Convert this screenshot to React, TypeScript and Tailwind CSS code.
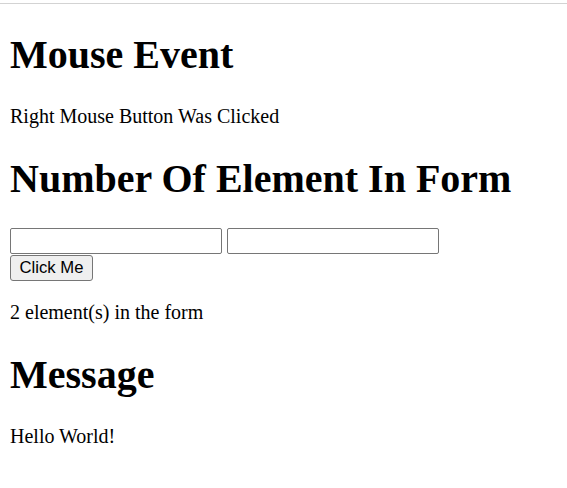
export default function App() {
  return (
    <div className="min-h-screen bg-white text-black font-['Liberation_Serif','Times_New_Roman',serif]">
      <div className="h-[3px]" />
      <div className="border-t border-[#d3d3d3] px-[10px] pb-[40px]">
        <h1 className="mt-[27.5px] text-[40px] font-bold leading-[46px]">Mouse Event</h1>
        <p className="mt-[27px] text-[20px] leading-[23px]">Right Mouse Button Was Clicked</p>

        <h1 className="mt-[28px] text-[40px] font-bold leading-[46px]">Number Of Element In Form</h1>
        <form className="mt-[26.5px]" onSubmit={(e) => e.preventDefault()}>
          <div className="flex gap-[5px]">
            <input type="text" className="w-[212px] h-[26px] border border-[#767676] rounded-[2px] bg-white px-[3px] outline-none" />
            <input type="text" className="w-[212px] h-[26px] border border-[#767676] rounded-[2px] bg-white px-[3px] outline-none" />
          </div>
          <button
            type="button"
            className="mt-[1px] w-[83px] h-[26px] flex items-center justify-center bg-[#efefef] border border-[#767676] rounded-[3px] text-[16.67px] leading-none text-black font-['Liberation_Sans',Arial,sans-serif]"
          >
            Click Me
          </button>
        </form>
        <p className="mt-[20px] text-[20px] leading-[23px]">2 element(s) in the form</p>

        <h1 className="mt-[27.5px] text-[40px] font-bold leading-[46px]">Message</h1>
        <p className="mt-[27px] text-[20px] leading-[23px]">Hello World!</p>
      </div>
    </div>
  );
}
